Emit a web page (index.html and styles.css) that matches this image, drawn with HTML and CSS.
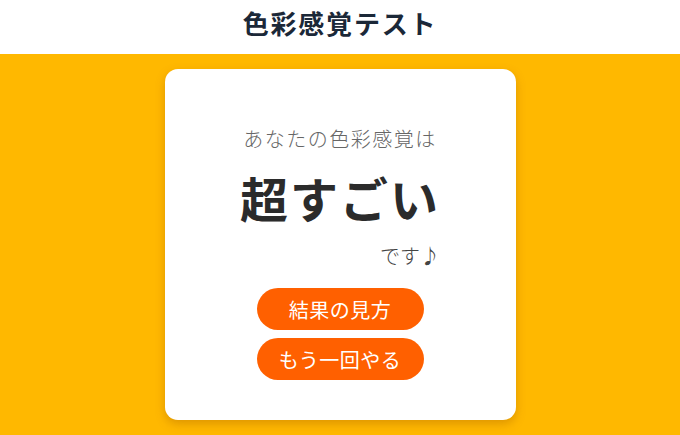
FILE: index.html
```html
<!DOCTYPE html>
<html lang="ja">
<head>
    <meta charset="UTF-8">
    <title>色彩感覚テスト</title>
    <link rel="stylesheet" href="styles.css">
</head>
<body>
    <div id="header">
        <h1>色彩感覚テスト</h1>
    </div>

    <div id="main">
        <div class="card">
            <div class="result">
                <p class="lead">あなたの色彩感覚は</p>
                <p class="rank">超すごい</p>
                <p class="tail">です♪</p>
            </div>
            <div class="buttons">
                <button class="btn">結果の見方</button>
                <button class="btn">もう一回やる</button>
            </div>
        </div>
    </div>
</body>
</html>
```

FILE: styles.css
```css
body {
    margin: 0;
    font-family: "Noto Sans CJK JP", "Noto Sans", sans-serif;
    background-color: #ffb800;
    height: 435px;
    overflow: hidden;
}
#header {
    background-color: #fff;
    height: 54px;
    display: flex;
    justify-content: center;
    align-items: center;
}
#header h1 {
    margin: 0 0 10px;
    font-size: 26px;
    font-weight: bold;
    color: #1b2838;
    letter-spacing: 1.8px;
}
#main {
    display: flex;
    justify-content: center;
    padding-top: 15px;
}
.card {
    width: 351px;
    height: 351px;
    box-sizing: border-box;
    background-color: #fff;
    border-radius: 13px;
    box-shadow: 0 4px 10px rgba(160, 90, 0, 0.35);
    display: flex;
    flex-direction: column;
    align-items: center;
    padding-top: 54px;
}
.result {
    width: 200px;
}
.result p {
    margin: 0;
}
.lead {
    font-size: 20px;
    font-weight: 300;
    color: #666;
    text-align: center;
    line-height: 32px;
    letter-spacing: 1.5px;
    white-space: nowrap;
}
.rank {
    font-family: "Noto Sans CJK JP", serif;
    font-size: 48px;
    font-weight: bold;
    color: #2b2b2b;
    text-align: center;
    line-height: 64px;
    letter-spacing: 2px;
    margin-top: 10px !important;
    white-space: nowrap;
}
.tail {
    font-size: 20px;
    font-weight: 300;
    color: #444;
    text-align: right;
    line-height: 30px;
    margin-top: 12px !important;
}
.buttons {
    display: flex;
    flex-direction: column;
    gap: 8px;
    margin-top: 17px;
}
.btn {
    width: 167px;
    height: 42px;
    border: none;
    border-radius: 21px;
    background-color: #ff6000;
    color: #fff;
    font-family: "Noto Sans CJK JP", sans-serif;
    font-size: 20px;
    font-weight: 400;
    letter-spacing: 0.5px;
    cursor: pointer;
}
```
